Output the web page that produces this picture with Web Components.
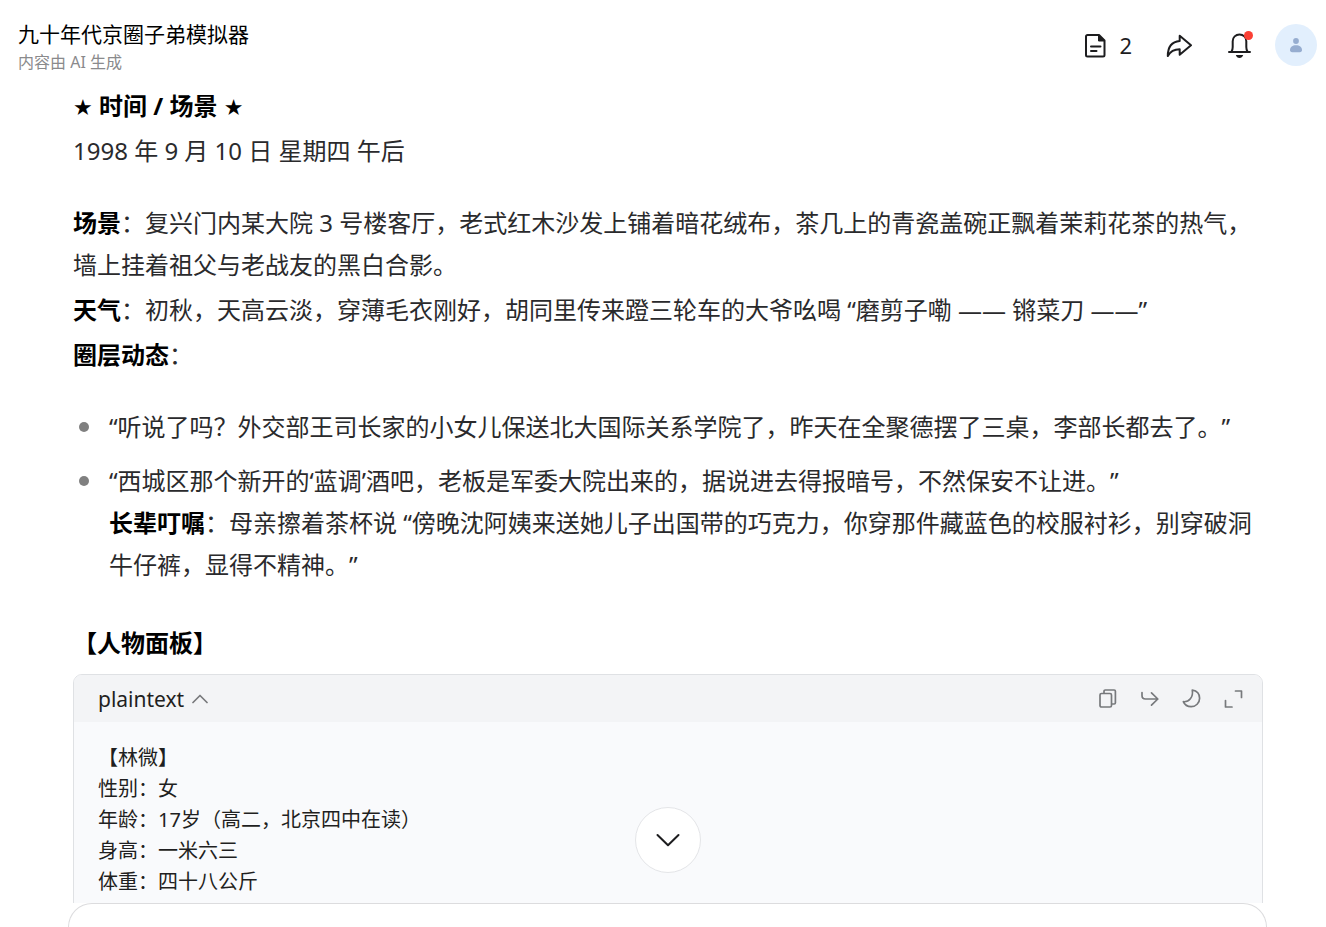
<!DOCTYPE html>
<html lang="zh-CN">
<head>
<meta charset="utf-8">
<meta name="viewport" content="width=device-width, initial-scale=1">
<title>九十年代京圈子弟模拟器</title>
<style>
  html, body { margin: 0; height: 100%; }
  body {
    background: #fff;
    color: #2a2a2c;
    font-family: "Noto Sans", "Noto Sans CJK SC", sans-serif;
    font-size: 24px;
    line-height: 42px;
    text-spacing-trim: space-all;
  }
  strong, h3 { color: #000; font-weight: 700; }
  h3, p { margin: 0; font-size: 24px; }
  .star { font-family: "DejaVu Sans", sans-serif; font-size: 22px; line-height: 30px; }
</style>
</head>
<body>
<chat-app>
  <chat-header slot="header" heading="九十年代京圈子弟模拟器" note="内容由 AI 生成" count="2"></chat-header>
  <chat-message>
    <message-block>
      <h3><span class="star">★</span> 时间 / 场景 <span class="star">★</span></h3>
      <p>1998 年 9 月 10 日 星期四 午后</p>
    </message-block>
    <message-block>
      <p><strong>场景</strong>：复兴门内某大院 3 号楼客厅，老式红木沙发上铺着暗花绒布，茶几上的青瓷盖碗正飘着茉莉花茶的热气，墙上挂着祖父与老战友的黑白合影。</p>
      <p><strong>天气</strong>：初秋，天高云淡，穿薄毛衣刚好，胡同里传来蹬三轮车的大爷吆喝 “磨剪子嘞 —— 锵菜刀 ——”</p>
      <p><strong>圈层动态</strong>：</p>
    </message-block>
    <bullet-list>
      <bullet-item>“听说了吗？外交部王司长家的小女儿保送北大国际关系学院了，昨天在全聚德摆了三桌，李部长都去了。”</bullet-item>
      <bullet-item>“西城区那个新开的‘蓝调’酒吧，老板是军委大院出来的，据说进去得报暗号，不然保安不让进。”<br><strong>长辈叮嘱</strong>：母亲擦着茶杯说 “傍晚沈阿姨来送她儿子出国带的巧克力，你穿那件藏蓝色的校服衬衫，别穿破洞牛仔裤，显得不精神。”</bullet-item>
    </bullet-list>
    <section-block>
      <h3>【人物面板】</h3>
      <code-panel language="plaintext">【林微】
性别：女
年龄：17岁（高二，北京四中在读）
身高：一米六三
体重：四十八公斤</code-panel>
    </section-block>
  </chat-message>
  <chat-composer slot="footer"></chat-composer>
</chat-app>

<script>
  const define = (name, html, setup) => {
    const template = document.createElement('template');
    template.innerHTML = html;
    customElements.define(name, class extends HTMLElement {
      constructor() {
        super();
        this.attachShadow({ mode: 'open' }).append(template.content.cloneNode(true));
      }
      connectedCallback() { if (setup) setup(this, this.shadowRoot); }
    });
  };

  define('chat-app', `
    <style>
      :host { display: flex; flex-direction: column; height: 100vh; overflow: hidden; background: #fff; }
      main { flex: 1; min-height: 0; overflow: hidden; }
    </style>
    <slot name="header"></slot>
    <main><slot></slot></main>
    <slot name="footer"></slot>`);

  define('chat-header', `
    <style>
      :host { display: flex; justify-content: space-between; align-items: flex-start; padding: 20px 9px 0 18px; }
      h1 { margin: 0; font-size: 21px; line-height: 28px; font-weight: 400; color: #000; }
      p { margin: 0; font-size: 16px; line-height: 28px; color: #8a8a8c; }
      .titles { padding-bottom: 9px; }
      nav { display: flex; align-items: center; gap: 34px; padding-top: 4px; }
      button { all: unset; display: flex; align-items: center; gap: 12px; position: relative; cursor: pointer;
        font-size: 22px; line-height: 30px; color: #1d1d1f; }
      svg { display: block; }
      .dot { position: absolute; right: -1px; top: 0; width: 9px; height: 9px; border-radius: 50%; background: #fb4034; }
      .avatar { width: 42px; height: 42px; margin-left: -11px; border-radius: 50%; background: #e2effd; justify-content: center; }
    </style>
    <div class="titles"><h1></h1><p></p></div>
    <nav aria-label="工具">
      <button type="button" aria-label="文档">
        <svg width="24" height="26" viewBox="0 0 24 26" fill="none" stroke="#1d1d1f" stroke-width="2" stroke-linecap="round" stroke-linejoin="round"><path d="M4.500 3H16l5.500 5.500V23a1.500 1.500 0 0 1-1.500 1.500H4.500A1.500 1.500 0 0 1 3 23V4.500A1.500 1.500 0 0 1 4.500 3Z"/><path d="M15.500 3v6h6Z" fill="#1d1d1f" stroke-width="1"/><path d="M8 14.500h9.500M8 19h5.500"/></svg>
        <span id="count"></span>
      </button>
      <button type="button" aria-label="分享">
        <svg width="26" height="26" viewBox="0 0 26 26" fill="none" stroke="#1d1d1f" stroke-width="2" stroke-linejoin="round"><path d="M13.700 3.700 25 13.300 13.700 22.800v-5.600C8.500 17.200 4.500 19 1.800 24 1.800 15 6 9.500 13.700 8.900Z"/></svg>
      </button>
      <button type="button" aria-label="通知">
        <svg width="26" height="28" viewBox="0 0 26 28" fill="none" stroke="#1d1d1f" stroke-width="2" stroke-linecap="round" stroke-linejoin="round"><path d="M3 21h21M5.500 20.500c.8-1.200 1.200-2.500 1.200-4.500v-5.700c0-4 3-6.800 6.800-6.800s6.800 2.800 6.800 6.800V16c0 2 .4 3.300 1.200 4.500"/><path d="M9.800 24h7.400c-.6 1.900-1.900 3-3.700 3s-3.100-1.100-3.700-3Z" fill="#1d1d1f" stroke="none"/></svg>
        <span class="dot"></span>
      </button>
      <button type="button" class="avatar" aria-label="账户">
        <svg width="14" height="16" viewBox="0 0 14 16" fill="#96add0"><circle cx="7" cy="4" r="2.900"/><path d="M1 13C1 10 3.500 8.200 7 8.200s6 1.800 6 4.800c0 1.400-.8 2.200-2.200 2.200H3.200C1.800 15.200 1 14.400 1 13Z"/></svg>
      </button>
    </nav>`, (host, root) => {
    root.querySelector('h1').textContent = host.getAttribute('heading');
    root.querySelector('p').textContent = host.getAttribute('note');
    root.querySelector('#count').textContent = host.getAttribute('count');
  });

  define('chat-message', `
    <style>
      :host { display: flex; flex-direction: column; gap: 30px; padding: 0 63px 0 73px; }
    </style>
    <slot></slot>`);

  define('message-block', `
    <style>:host { display: flex; flex-direction: column; gap: 3px; }</style>
    <slot></slot>`);

  define('section-block', `
    <style>:host { display: flex; flex-direction: column; gap: 10px; padding-top: 6px; }</style>
    <slot></slot>`);

  define('bullet-list', `
    <style>:host { display: flex; flex-direction: column; gap: 12px; }</style>
    <slot></slot>`, host => host.setAttribute('role', 'list'));

  define('bullet-item', `
    <style>
      :host { display: grid; grid-template-columns: 36px 1fr; }
      i { width: 10px; height: 10px; margin: 16px 0 0 6px; border-radius: 50%; background: #808080; }
    </style>
    <i></i><div><slot></slot></div>`, host => host.setAttribute('role', 'listitem'));

  define('code-panel', `
    <style>
      :host { display: block; border: 1px solid #dfe1e4; border-radius: 9px 9px 0 0; background: #f9fafc; overflow: hidden; }
      header { display: flex; justify-content: space-between; align-items: center; height: 47px; padding: 0 18px 0 24px; background: #f3f4f6; }
      button { all: unset; display: flex; align-items: center; gap: 8px; cursor: pointer; }
      .language { font-size: 21px; line-height: 30px; color: #1f1f21; }
      .tools { display: flex; gap: 22px; }
      svg { display: block; fill: none; stroke: #77797c; stroke-width: 1.700; stroke-linecap: round; stroke-linejoin: round; }
      pre { margin: 0; padding: 20px 24px 32px; font: inherit; font-size: 20px; line-height: 31px; color: #1f1f21; white-space: pre-wrap; }
    </style>
    <header>
      <button type="button" class="language"><span></span>
        <svg width="16" height="10" viewBox="0 0 16 10"><path d="M1 8.500 8 1.500l7 7"/></svg>
      </button>
      <div class="tools">
        <button type="button" aria-label="复制"><svg width="20" height="20" viewBox="0 0 20 20"><rect x="2" y="4.500" width="11.500" height="13.500" rx="1.500"/><path d="M6 4V2.200C6 1.500 6.500 1 7.200 1h9c.7 0 1.200.5 1.200 1.200v11.600c0 .7-.5 1.200-1.200 1.200H14"/></svg></button>
        <button type="button" aria-label="换行"><svg width="20" height="20" viewBox="0 0 20 20"><path d="M2 3.500V6.500C2 8.800 3.300 10 5.500 10h12.300M11.500 3.800l6.300 6.200-6.300 6.200"/></svg></button>
        <button type="button" aria-label="主题"><svg width="20" height="20" viewBox="0 0 20 20"><path d="M10.300 1c4.300.8 7.300 3.800 7.300 8.200 0 4.800-3.800 8.500-8.500 8.500-3.500 0-6.500-2-7.800-5 5.600.7 10.200-4.500 9-11.700Z"/></svg></button>
        <button type="button" aria-label="全屏"><svg width="20" height="20" viewBox="0 0 20 20"><path d="M11.500 2h6v6.500M1.500 11.500v6.500h6.500"/></svg></button>
      </div>
    </header>
    <pre><slot></slot></pre>`, (host, root) => {
    root.querySelector('.language span').textContent = host.getAttribute('language');
  });

  define('chat-composer', `
    <style>
      :host { display: block; position: relative; box-sizing: border-box; height: 24px; margin: 0 59px 0 68px;
        border: 1px solid #dcdcde; border-bottom: 0; border-radius: 30px 30px 0 0; background: #fff; }
      button { position: absolute; left: 50%; bottom: 54px; transform: translateX(-50%); box-sizing: border-box;
        width: 66px; height: 66px; padding: 0; border: 1px solid #e4e5e8; border-radius: 50%; background: #fff;
        display: flex; align-items: center; justify-content: center; cursor: pointer; }
      svg { display: block; fill: none; stroke: #1d1d1f; stroke-width: 2; stroke-linecap: round; stroke-linejoin: round; }
    </style>
    <button type="button" aria-label="滚动到底部"><svg width="24" height="14" viewBox="0 0 24 14"><path d="M1.500 2 12 12.300 22.500 2"/></svg></button>`);
</script>
</body>
</html>
